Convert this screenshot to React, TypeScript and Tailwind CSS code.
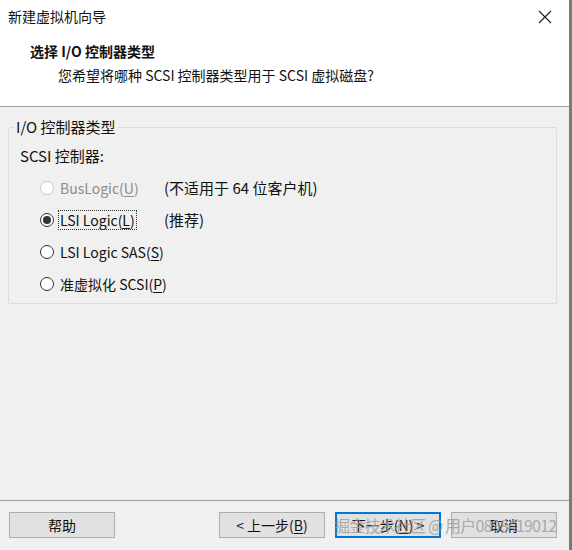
import React from "react"

const font = { fontFamily: '"Noto Sans CJK SC", "Noto Sans", sans-serif' }

function Radio({ checked, disabled }: { checked?: boolean; disabled?: boolean }) {
  return (
    <span
      className={`flex h-[14px] w-[14px] shrink-0 items-center justify-center rounded-full border bg-white ${
        disabled ? "border-[#cccccc]" : "border-[#333333]"
      }`}
    >
      {checked && <span className="h-[8px] w-[8px] rounded-full bg-[#333333]" />}
    </span>
  )
}

function Option({
  label,
  mnemonic,
  note,
  checked,
  disabled,
  focused,
}: {
  label: string
  mnemonic: string
  note?: string
  checked?: boolean
  disabled?: boolean
  focused?: boolean
}) {
  return (
    <div className="flex h-[32px] items-center whitespace-nowrap">
      <div className="flex min-w-[124px] items-center gap-[5px]">
        <Radio checked={checked} disabled={disabled} />
        <span
          className={`px-[1px] leading-[18px] ${disabled ? "text-[#8d8d8d]" : "text-[#111111]"} ${
            focused ? "outline outline-1 outline-dotted outline-[#333333]" : ""
          }`}
        >
          {label}(<span className="underline underline-offset-2">{mnemonic}</span>)
        </span>
      </div>
      {note && <span className="text-[15px] text-[#111111]">{note}</span>}
    </div>
  )
}

function Btn({ children, primary }: { children: React.ReactNode; primary?: boolean }) {
  return (
    <button
      className={`flex h-[26px] w-[106px] items-center justify-center whitespace-nowrap bg-[#e1e1e1] text-[14px] text-[#111111] ${
        primary ? "border-2 border-[#0078d7]" : "border border-[#adadad]"
      }`}
    >
      {children}
    </button>
  )
}

export default function App() {
  return (
    <div className="relative h-[550px] w-[572px] overflow-hidden bg-white text-[14px]" style={font}>
      <div className="flex h-full w-[572px]">
        <div className="flex h-full w-[569px] flex-col">
          {/* header */}
          <div className="flex h-[106px] flex-col bg-white">
            <div className="flex h-[33px] items-center justify-between pl-[8px] pr-[17px]">
              <span className="text-[14px] text-[#111111]">新建虚拟机向导</span>
              <svg width="14" height="14" viewBox="0 0 14 14">
                <path d="M1 1 L13 13 M13 1 L1 13" stroke="#222" strokeWidth="1.2" />
              </svg>
            </div>
            <div className="pl-[30px] pt-[8px] text-[14px] font-bold leading-[20px] text-[#111111]">
              选择 I/O 控制器类型
            </div>
            <div className="pl-[58px] pt-[4px] leading-[20px] text-[#111111]">
              您希望将哪种 SCSI 控制器类型用于 SCSI 虚拟磁盘?
            </div>
          </div>
          <div className="h-[1px] bg-[#a0a0a0]" />

          {/* body */}
          <div className="flex flex-1 flex-col bg-[#f0f0f0]">
            <div className="px-[8px] pr-[12px] pt-[11px]">
              <fieldset className="h-[186px] rounded-[2px] border border-[#dcdcdc] pl-[11px]">
                <legend className="-ml-[6px] px-[2px] text-[15px] leading-[18px] text-[#111111]">
                  I/O 控制器类型
                </legend>
                <div className="pt-[10px] text-[15px] leading-[20px] text-[#111111]">SCSI 控制器:</div>
                <div className="mt-[6px] pl-[20px]">
                  <Option label="BusLogic" mnemonic="U" note="(不适用于 64 位客户机)" disabled />
                  <Option label="LSI Logic" mnemonic="L" note="(推荐)" checked focused />
                  <Option label="LSI Logic SAS" mnemonic="S" />
                  <Option label="准虚拟化 SCSI" mnemonic="P" />
                </div>
              </fieldset>
            </div>
            <div className="flex-1" />
            <div className="h-[1px] bg-[#a0a0a0]" />
            <div className="flex h-[49px] items-start pl-[9px] pr-[12px] pt-[11px]">
              <Btn>帮助</Btn>
              <div className="flex-1" />
              <div className="flex gap-[10px]">
                <Btn>
                  &lt; 上一步(<span className="underline underline-offset-2">B</span>)
                </Btn>
                <Btn primary>
                  下一步(<span className="underline underline-offset-2">N</span>) &gt;
                </Btn>
                <Btn>取消</Btn>
              </div>
            </div>
          </div>
        </div>
        <div className="h-full w-[3px] bg-[#7a7a7a]" />
      </div>

      {/* watermark */}
      <div className="pointer-events-none absolute left-[334px] top-[513px] whitespace-nowrap text-[16px] tracking-[-0.8px] text-[#9a9a9a]/80">
        掘金技术社区 @ 用户0898419012
      </div>
    </div>
  )
}
